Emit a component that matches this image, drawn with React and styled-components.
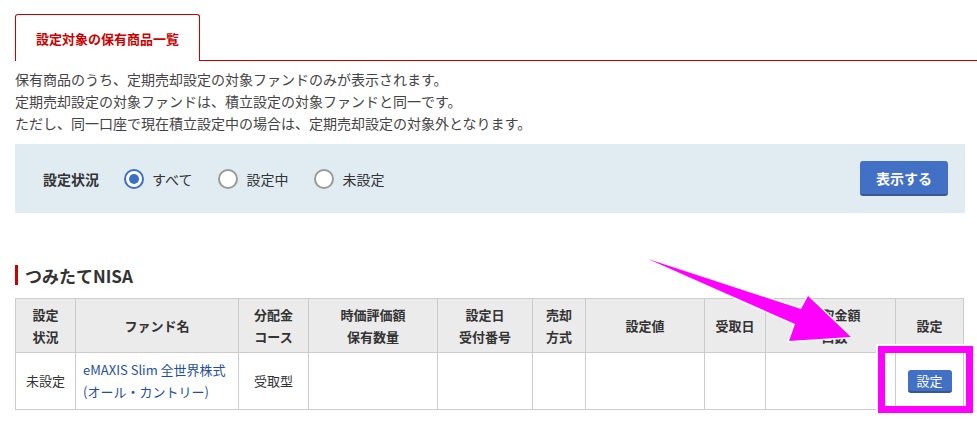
import React from "react";
import styled, { createGlobalStyle } from "styled-components";

const Global = createGlobalStyle`
  html, body { margin: 0; padding: 0; background: #fff; }
  body {
    font-family: "Noto Sans CJK JP", "Noto Sans", sans-serif;
    color: #444;
    width: 977px;
    height: 427px;
    overflow: hidden;
  }
`;

const Page = styled.div`
  position: relative;
  width: 977px;
  height: 427px;
  box-sizing: border-box;
  padding: 14px 13px 0 15px;
`;

const TabBar = styled.div`
  display: flex;
  border-bottom: 1px solid #cc0000;
  margin-right: -13px;
`;

const Tab = styled.div`
  width: 183px;
  height: 46px;
  border: 1px solid #cc0000;
  border-bottom: none;
  border-radius: 3px 3px 0 0;
  display: flex;
  align-items: center;
  justify-content: center;
  color: #cc0000;
  font-size: 13px;
  font-weight: bold;
  margin-bottom: -1px;
  background: #fff;
`;

const Notes = styled.p`
  margin: 7px 0 0;
  font-size: 14px;
  line-height: 22px;
  color: #444;
`;

const FilterBox = styled.div`
  margin-top: 10px;
  height: 69px;
  width: 950px;
  background: #e1ebf2;
  display: flex;
  align-items: center;
  padding: 0 17px 0 28px;
  box-sizing: border-box;
`;

const FilterLabel = styled.span`
  font-size: 14px;
  font-weight: bold;
  color: #333;
  margin-right: 25px;
`;

const RadioItem = styled.label`
  display: flex;
  align-items: center;
  font-size: 14px;
  color: #333;
  margin-right: 26px;
`;

const RadioCircle = styled.span`
  width: 20px;
  height: 20px;
  box-sizing: border-box;
  border-radius: 50%;
  border: 2px solid ${(p) => (p.$checked ? "#3b6fc9" : "#9a9a9a")};
  background: #fff;
  display: flex;
  align-items: center;
  justify-content: center;
  margin-right: 8px;
  &::after {
    content: "";
    display: ${(p) => (p.$checked ? "block" : "none")};
    width: 10px;
    height: 10px;
    border-radius: 50%;
    background: #3b6fc9;
  }
`;

const Spacer = styled.div`
  flex: 1;
`;

const PrimaryButton = styled.button`
  width: 88px;
  height: 35px;
  border: none;
  border-bottom: 2px solid #3a5795;
  border-radius: 3px;
  background: #4270c4;
  color: #fff;
  font-family: inherit;
  font-size: 14px;
  font-weight: bold;
  padding: 0;
`;

const SectionTitle = styled.h2`
  margin: 52px 0 0;
  height: 20px;
  border-left: 3px solid #cc0000;
  padding-left: 7px;
  font-size: 17px;
  font-weight: bold;
  color: #333;
  display: flex;
  align-items: center;
`;

const Table = styled.table`
  margin-top: 13px;
  border-collapse: collapse;
  table-layout: fixed;
  width: 949px;
  font-size: 13px;
  color: #333;
`;

const Th = styled.th`
  background: #ebebeb;
  border: 1px solid #cccccc;
  font-weight: bold;
  line-height: 22px;
  padding: 4px 2px 4px ${(p) => (p.$shift ? "10px" : "2px")};
  height: 45px;
  text-align: center;
  vertical-align: middle;
`;

const Td = styled.td`
  border: 1px solid #cccccc;
  line-height: 22px;
  padding: 6px ${(p) => (p.$left ? "7px" : "2px")};
  height: 44px;
  text-align: ${(p) => (p.$left ? "left" : "center")};
  vertical-align: middle;
`;

const FundLink = styled.a`
  color: #1f4f9e;
  text-decoration: none;
`;

const SmallButton = styled.button`
  width: 44px;
  height: 23px;
  border: none;
  border-bottom: 2px solid #3a5795;
  border-radius: 3px;
  background: #4270c4;
  color: #fff;
  font-family: inherit;
  font-size: 13px;
  padding: 0;
`;

const Annotation = styled.svg`
  position: absolute;
  left: 0;
  top: 0;
  pointer-events: none;
`;

const cols = [60, 163, 70, 129, 95, 53, 119, 61, 130, 68];
const headers = [
  { lines: ["設定", "状況"] },
  { lines: ["ファンド名"] },
  { lines: ["分配金", "コース"] },
  { lines: ["時価評価額", "保有数量"] },
  { lines: ["設定日", "受付番号"] },
  { lines: ["売却", "方式"] },
  { lines: ["設定値"] },
  { lines: ["受取日"] },
  { lines: ["受取金額", "口数"], shift: true },
  { lines: ["設定"] },
];

export default function App() {
  return (
    <>
      <Global />
      <Page>
        <TabBar>
          <Tab>設定対象の保有商品一覧</Tab>
        </TabBar>
        <Notes>
          保有商品のうち、定期売却設定の対象ファンドのみが表示されます。
          <br />
          定期売却設定の対象ファンドは、積立設定の対象ファンドと同一です。
          <br />
          ただし、同一口座で現在積立設定中の場合は、定期売却設定の対象外となります。
        </Notes>
        <FilterBox>
          <FilterLabel>設定状況</FilterLabel>
          <RadioItem>
            <RadioCircle $checked />
            すべて
          </RadioItem>
          <RadioItem>
            <RadioCircle />
            設定中
          </RadioItem>
          <RadioItem>
            <RadioCircle />
            未設定
          </RadioItem>
          <Spacer />
          <PrimaryButton>表示する</PrimaryButton>
        </FilterBox>
        <SectionTitle>つみたてNISA</SectionTitle>
        <Table>
          <colgroup>
            {cols.map((w, i) => (
              <col key={i} style={{ width: w }} />
            ))}
          </colgroup>
          <thead>
            <tr>
              {headers.map((h, i) => (
                <Th key={i} $shift={h.shift}>
                  {h.lines.map((line, j) => (
                    <React.Fragment key={j}>
                      {j > 0 && <br />}
                      {line}
                    </React.Fragment>
                  ))}
                </Th>
              ))}
            </tr>
          </thead>
          <tbody>
            <tr>
              <Td>未設定</Td>
              <Td $left>
                <FundLink href="#">
                  eMAXIS Slim 全世界株式
                  <br />
                  (オール・カントリー)
                </FundLink>
              </Td>
              <Td>受取型</Td>
              <Td />
              <Td />
              <Td />
              <Td />
              <Td />
              <Td />
              <Td>
                <SmallButton>設定</SmallButton>
              </Td>
            </tr>
          </tbody>
        </Table>
        <Annotation width="977" height="427" viewBox="0 0 977 427">
          <polygon
            points="648,259 801,309 808,296 851,337 789,341 795,324"
            fill="#ff00ff"
            stroke="#ffffff"
            strokeWidth="3"
            strokeLinejoin="round"
            paintOrder="stroke"
          />
          <rect
            x="880.5"
            y="348.5"
            width="90"
            height="62"
            fill="none"
            stroke="#ffffff"
            strokeWidth="9"
          />
          <rect
            x="881.5"
            y="349.5"
            width="88"
            height="60"
            fill="none"
            stroke="#ff00ff"
            strokeWidth="7"
          />
        </Annotation>
      </Page>
    </>
  );
}
